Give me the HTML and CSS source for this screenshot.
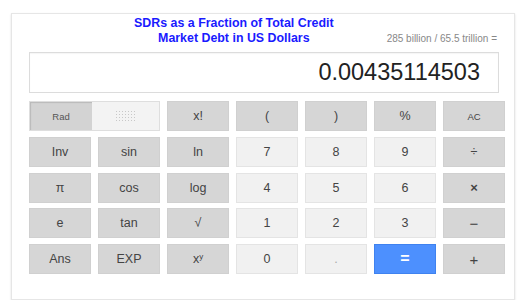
FILE: index.html
```html
<!DOCTYPE html>
<html>
<head>
<meta charset="utf-8">
<link rel="stylesheet" href="styles.css">
</head>
<body>
<div class="card">
  <div class="header">
    <div class="title">SDRs as a Fraction of Total Credit<br>Market Debt in US Dollars</div>
    <div class="expr">285 billion / 65.5 trillion =</div>
  </div>
  <div class="display">0.00435114503</div>
  <div class="keys">
    <div class="toggle">
      <div class="rad">Rad</div>
      <div class="deg"><span class="dots"></span></div>
    </div>
    <div class="key dark">x!</div>
    <div class="key dark">(</div>
    <div class="key dark">)</div>
    <div class="key dark">%</div>
    <div class="key dark small">AC</div>

    <div class="key dark">Inv</div>
    <div class="key dark">sin</div>
    <div class="key dark">ln</div>
    <div class="key light">7</div>
    <div class="key light">8</div>
    <div class="key light">9</div>
    <div class="key dark">÷</div>

    <div class="key dark">π</div>
    <div class="key dark">cos</div>
    <div class="key dark">log</div>
    <div class="key light">4</div>
    <div class="key light">5</div>
    <div class="key light">6</div>
    <div class="key dark op">×</div>

    <div class="key dark">e</div>
    <div class="key dark">tan</div>
    <div class="key dark">√</div>
    <div class="key light">1</div>
    <div class="key light">2</div>
    <div class="key light">3</div>
    <div class="key dark minus">−</div>

    <div class="key dark">Ans</div>
    <div class="key dark">EXP</div>
    <div class="key dark"><span>x<sup>y</sup></span></div>
    <div class="key light">0</div>
    <div class="key light dot">.</div>
    <div class="key blue">=</div>
    <div class="key dark plus">+</div>
  </div>
</div>
</body>
</html>
```

FILE: styles.css
```css
html, body {
  margin: 0;
  padding: 0;
  background: #fff;
}
body {
  font-family: "Liberation Sans", Arial, sans-serif;
  padding: 13px 0 0 11px;
}
.card {
  width: 476px;
  border: 1px solid #e6e6e6;
  box-shadow: 0 1px 2px rgba(0,0,0,0.12);
  padding: 2px 9px 25px 17px;
}
.header {
  display: flex;
  align-items: flex-end;
  width: 470px;
}
.title {
  flex: 1;
  text-align: center;
  padding-left: 52px;
  color: #1a1aff;
  font-weight: bold;
  font-size: 12.4px;
  line-height: 15px;
}
.expr {
  color: #888;
  font-size: 10px;
  line-height: 13px;
  padding-right: 2px;
  padding-bottom: 1px;
}
.display {
  margin-top: 6px;
  width: 450px;
  height: 39px;
  border: 1px solid #dcdcdc;
  box-shadow: inset 0 1px 1px rgba(0,0,0,0.04);
  text-align: right;
  padding-right: 18px;
  font-size: 23.5px;
  line-height: 39px;
  color: #222;
}
.keys {
  margin-top: 8px;
  display: grid;
  grid-template-columns: repeat(7, 62px);
  grid-auto-rows: 30px;
  column-gap: 7px;
  row-gap: 5.75px;
}
.key {
  box-sizing: border-box;
  display: flex;
  align-items: center;
  justify-content: center;
  font-size: 12.5px;
  color: #444;
}
.dark {
  background: #d6d6d6;
  border: 1px solid #d0d0d0;
}
.light {
  background: #f1f1f1;
  border: 1px solid #e4e4e4;
}
.blue {
  background: #4d90fe;
  border: 1px solid #3f82ef;
  color: #fff;
  font-weight: bold;
  font-size: 16px;
}
.small {
  font-size: 9.5px;
}
.op {
  font-size: 13px;
  font-weight: bold;
}
.minus {
  font-size: 15px;
}
.plus {
  font-size: 15px;
}
.dot {
  color: #aaa;
}
sup {
  font-size: 8px;
  vertical-align: 4px;
  line-height: 0;
}
.toggle {
  grid-column: span 2;
  display: flex;
  box-sizing: border-box;
  border: 1px solid #dedede;
}
.rad {
  width: 62px;
  background: #d3d3d3;
  box-shadow: inset 1px 1px 1px rgba(0,0,0,0.12);
  display: flex;
  align-items: center;
  justify-content: center;
  font-size: 9.5px;
  color: #555;
}
.deg {
  flex: 1;
  background: #f3f3f3;
  display: flex;
  align-items: center;
  justify-content: center;
}
.dots {
  width: 22px;
  height: 12px;
  background-image: radial-gradient(circle, #c8c8c8 0.7px, transparent 0.9px);
  background-size: 3px 3px;
}
```
